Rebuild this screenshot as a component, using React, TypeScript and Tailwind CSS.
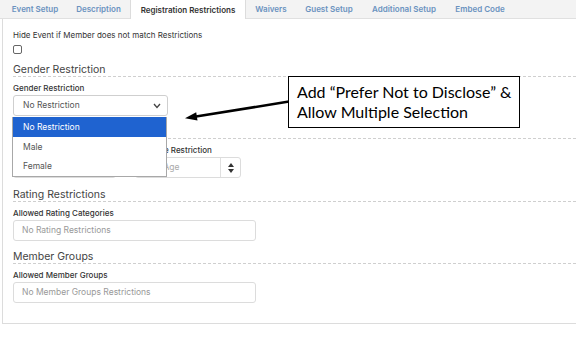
import React from "react";

const tabs = [
  { label: "Event Setup", w: "w-[64px]" },
  { label: "Description", w: "w-[63px]" },
  { label: "Registration Restrictions", w: "w-[116px]", active: true },
  { label: "Waivers", w: "w-[50px]" },
  { label: "Guest Setup", w: "w-[66px]" },
  { label: "Additional Setup", w: "w-[84px]" },
  { label: "Embed Code", w: "w-[68px]" },
];

function Heading({ children, mt }: { children: React.ReactNode; mt: string }) {
  return (
    <div className={`${mt} text-[10.5px] leading-[13px] text-[#444] border-b border-dashed border-[#cfcfcf]`}>
      {children}
    </div>
  );
}

function Label({ children }: { children: React.ReactNode }) {
  return <div className="mt-[6px] text-[8px] leading-[11px] font-medium text-[#333]">{children}</div>;
}

function Spinner() {
  return (
    <div className="w-[20px] h-full border-l border-[#e0e0e0] flex flex-col items-center justify-center gap-[2px]">
      <svg width="6" height="4" viewBox="0 0 6 4"><polygon points="3,0 6,4 0,4" fill="#333" /></svg>
      <svg width="6" height="4" viewBox="0 0 6 4"><polygon points="0,0 6,0 3,4" fill="#333" /></svg>
    </div>
  );
}

export default function App() {
  return (
    <div className="relative w-[576px] h-[349px] bg-white overflow-hidden font-['Inter',sans-serif]">
      <div className="flex h-[19px] bg-[#f3f3f3] border-b border-[#e0e0e0] pl-[3px]">
        {tabs.map((t) =>
          t.active ? (
            <div
              key={t.label}
              className={`${t.w} h-[19px] bg-white border-x border-[#dcdcdc] flex items-center justify-center text-[8px] font-semibold text-[#333]`}
            >
              {t.label}
            </div>
          ) : (
            <div
              key={t.label}
              className={`${t.w} h-[18px] flex items-center justify-center text-[8px] font-semibold text-[#6a92bf]`}
            >
              {t.label}
            </div>
          )
        )}
      </div>

      <div className="ml-[2px] h-[305px] border-l border-b border-[#dcdcdc] pl-[10px] pt-[10px]">
        <div className="text-[8px] leading-[12px] text-[#333]">Hide Event if Member does not match Restrictions</div>
        <div className="mt-[4px] w-[9px] h-[9px] border border-[#666] rounded-[2px] bg-white" />

        <Heading mt="mt-[9px]">Gender Restriction</Heading>
        <Label>Gender Restriction</Label>
        <div className="mt-[1px] w-[155px] h-[21px] border border-[#cfcfcf] rounded-[3px] flex items-center justify-between pl-[9px] pr-[6px] text-[8.5px] text-[#555]">
          <span>No Restriction</span>
          <svg width="8" height="6" viewBox="0 0 8 6">
            <polyline points="1,1 4,4.5 7,1" fill="none" stroke="#444" strokeWidth="1.3" />
          </svg>
        </div>

        <Heading mt="mt-[9px]">Age Restriction</Heading>
        <div className="mt-[6px] flex">
          <div className="w-[103px]">
            <div className="text-[8px] leading-[11px] font-medium text-[#333]">Min Age Restriction</div>
            <div className="mt-[1px] h-[21px] border border-[#dcdcdc] rounded-[3px] flex items-center justify-between">
              <span className="pl-[8px] text-[8.5px] text-[#aaa]">Min Age</span>
              <Spinner />
            </div>
          </div>
          <div className="ml-[19px] w-[106px]">
            <div className="text-[8px] leading-[11px] font-medium text-[#333]">Max Age Restriction</div>
            <div className="mt-[1px] h-[21px] border border-[#dcdcdc] rounded-[3px] flex items-center justify-between">
              <span className="pl-[8px] text-[8.5px] text-[#aaa]">Max Age</span>
              <Spinner />
            </div>
          </div>
        </div>

        <Heading mt="mt-[10px]">Rating Restrictions</Heading>
        <Label>Allowed Rating Categories</Label>
        <div className="mt-[1px] w-[243px] h-[21px] border border-[#dcdcdc] rounded-[3px] flex items-center pl-[8px] text-[8.5px] text-[#999]">
          No Rating Restrictions
        </div>

        <Heading mt="mt-[9px]">Member Groups</Heading>
        <Label>Allowed Member Groups</Label>
        <div className="mt-[1px] w-[243px] h-[21px] border border-[#dcdcdc] rounded-[3px] flex items-center pl-[8px] text-[8.5px] text-[#999]">
          No Member Groups Restrictions
        </div>
      </div>

      {/* open dropdown list */}
      <div className="absolute left-[12px] top-[117px] w-[155px] h-[60px] bg-white border border-[#a8a8a8] border-t-0 text-[8.5px] flex flex-col">
        <div className="h-[20px] bg-[#1f63d0] text-white flex items-center pl-[10px]">No Restriction</div>
        <div className="h-[20px] text-[#555] flex items-center pl-[10px]">Male</div>
        <div className="h-[19px] text-[#555] flex items-center pl-[10px]">Female</div>
      </div>

      {/* annotation */}
      <svg className="absolute left-0 top-0 pointer-events-none" width="576" height="349" viewBox="0 0 576 349">
        <line x1="289" y1="101.6" x2="196" y2="116.5" stroke="#000" strokeWidth="2.5" />
        <polygon points="185,118.3 197.5,120.5 196.2,112.2" fill="#000" />
      </svg>
      <div className="absolute left-[288px] top-[76px] w-[232px] h-[52px] bg-white border border-black pl-[8px] pt-[5px] text-[16px] leading-[20px] text-black font-['Lato',sans-serif]">
        <div>Add “Prefer Not to Disclose” &amp;</div>
        <div>Allow Multiple Selection</div>
      </div>
    </div>
  );
}
